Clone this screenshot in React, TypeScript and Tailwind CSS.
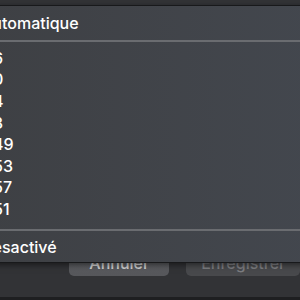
import React from 'react';

const options = ['6', '0', '4', '3', '49', '53', '57', '51'];

const App: React.FC = () => {
  return (
    <div className="relative w-[300px] h-[300px] overflow-hidden bg-[#323336] font-['Inter',sans-serif]">
      {/* dialog behind the menu */}
      <div className="flex flex-col h-full">
        <div className="flex-1" />
        <div className="flex items-start gap-[17px] pl-[69px] h-[21px]">
          <button className="w-[115px] h-[32px] mt-[-18px] flex items-center justify-center pt-[5px] rounded-[5px] bg-gradient-to-b from-[#616266] to-[#56575b] text-[#d0d0d0] text-[16px] font-medium">
            Annuler
          </button>
          <button className="w-[130px] h-[32px] mt-[-18px] flex items-center justify-center pt-[5px] rounded-[5px] bg-[#48494c] text-[#7c7d80] text-[16px] font-medium">
            Enregistrer
          </button>
        </div>
        <div className="h-[14px]" />
        <div className="h-[3px] bg-[#1e1f21]" />
      </div>

      {/* popup menu */}
      <div className="absolute left-[-20px] top-[5px] w-[340px] h-[258px] border border-[#18191b] bg-gradient-to-r from-[#3e4044] to-[#43474e] text-white text-[16px] font-medium shadow-[0_2px_6px_rgba(0,0,0,0.5)]">
        <div className="h-[34px] flex items-center pl-[0px]">Automatique</div>
        <div className="h-[2px] bg-[#6a6c70]" />
        <div className="pt-[5px] pb-[9px] flex flex-col">
          {options.map((o) => (
            <div key={o} className="h-[21.6px] flex items-center pl-[12px]">
              {o}
            </div>
          ))}
        </div>
        <div className="h-[2px] bg-[#6a6c70]" />
        <div className="h-[30px] flex items-center pt-[3px] pl-[0px]">Désactivé</div>
      </div>
    </div>
  );
};

export default App;
